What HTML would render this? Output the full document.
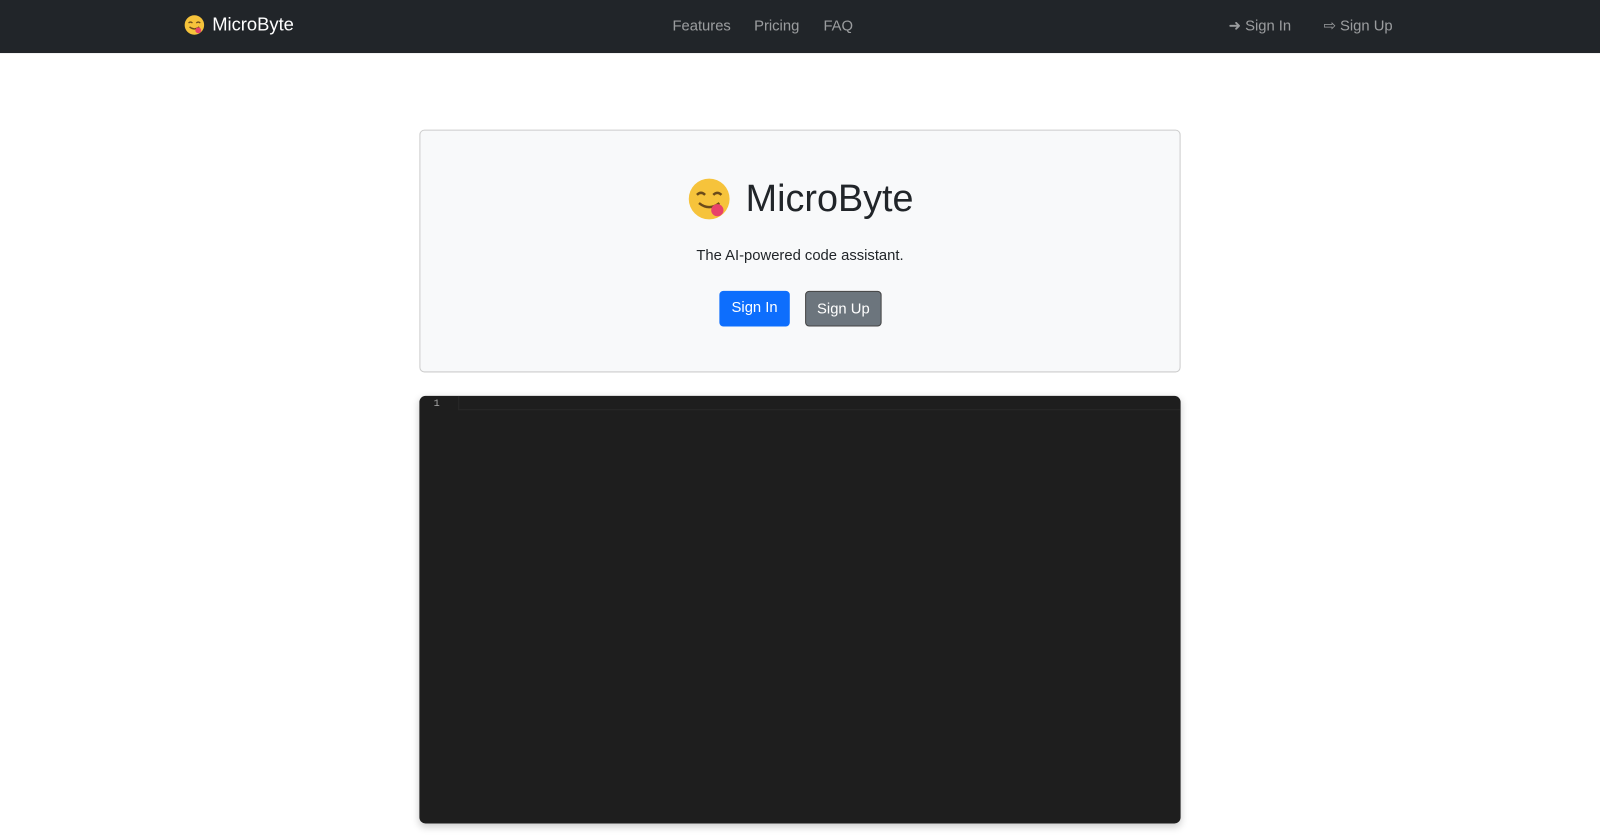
<!DOCTYPE html>
<html><head><style>
*{box-sizing:border-box;margin:0;padding:0}
body{width:1600px;height:834px;background:#fff;font-family:"Liberation Sans",sans-serif;overflow:hidden;position:relative}
#w{position:absolute;left:0;top:0;width:1568px;height:818px;transform:scale(1.0204);transform-origin:0 0}
.nav{position:absolute;left:0;top:0;width:1600px;height:52px;background:#212529}
.nav a{position:absolute;top:18px;font-size:14.5px;color:rgba(255,255,255,.55);text-decoration:none}
.brand{position:absolute;left:180px;top:14px;display:flex;align-items:center;color:#fff;font-size:18px}
.card{position:absolute;left:411px;top:127px;width:746px;height:238px;background:#f8f9fa;border:1px solid #ccc;border-radius:5px}
.title{position:absolute;left:0;width:100%;top:45px;display:flex;justify-content:center;align-items:center;font-size:37px;color:#212529}
.sub{position:absolute;width:100%;top:115px;text-align:center;font-size:14.5px;color:#212529}
.btn{position:absolute;top:157px;height:35px;border-radius:4px;color:#fff;font-size:14.5px;line-height:35px;text-align:center}
.ed{position:absolute;left:411px;top:388px;width:746px;height:419px;background:#1e1e1e;border-radius:6px;box-shadow:0 3px 8px rgba(0,0,0,.2);overflow:hidden}
</style></head><body><div id="w">
<div class="nav">
<div class="brand"><svg width="21" height="21" viewBox="0 0 22 22" style="margin-right:7px"><circle cx="11" cy="11" r="10" fill="#f6c33b"/><path d="M5 9q2-2 4 0M13 9q2-2 4 0" stroke="#6b4b1a" stroke-width="1.4" fill="none"/><path d="M6 13q5 4 10 0" stroke="#6b4b1a" stroke-width="1.4" fill="none"/><circle cx="15" cy="16.5" r="3" fill="#e8426a"/></svg>MicroByte</div>
<a style="left:659px">Features</a><a style="left:739px">Pricing</a><a style="left:807px">FAQ</a>
<a style="left:1204px">➜ Sign In</a><a style="left:1297px">⇨ Sign Up</a>
</div>
<div class="card">
<div class="title"><svg width="44" height="44" viewBox="0 0 22 22" style="margin-right:14px"><circle cx="11" cy="11" r="10" fill="#f6c33b"/><path d="M5 9q2-2 4 0M13 9q2-2 4 0" stroke="#6b4b1a" stroke-width="1.2" fill="none"/><path d="M6 13q5 4 10 0" stroke="#6b4b1a" stroke-width="1.2" fill="none"/><circle cx="15" cy="16.5" r="3" fill="#e8426a"/></svg>MicroByte</div>
<div class="sub">The AI-powered code assistant.</div>
<div class="btn" style="left:293px;width:69px;background:#0d6efd">Sign In</div>
<div class="btn" style="left:377px;width:75px;background:#6c757d;border:1px solid #444">Sign Up</div>
</div>
<div class="ed">
<div style="position:absolute;left:14px;top:3px;font:10px 'Liberation Mono',monospace;color:#aaa">1</div>
<div style="position:absolute;left:38px;top:0;right:0;height:14px;border:1px solid #282828;border-right:none;border-top:none"></div>
</div>
</div></body></html>
